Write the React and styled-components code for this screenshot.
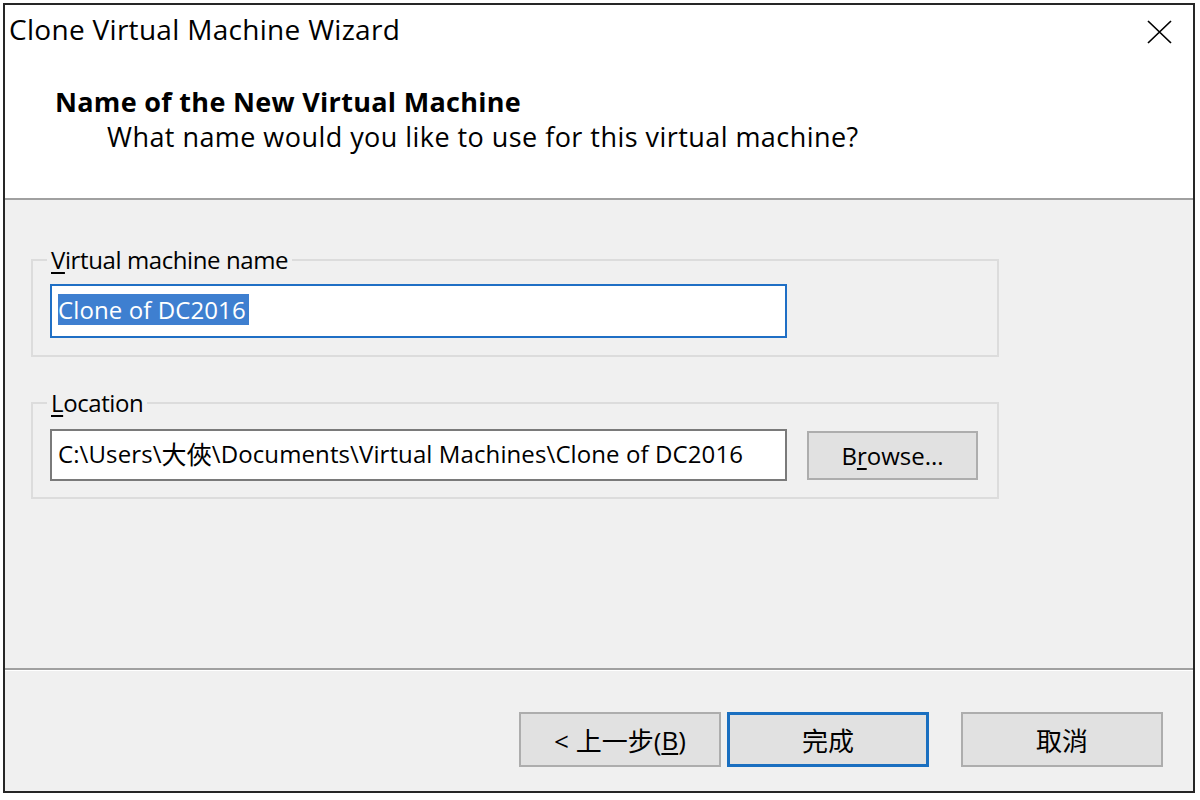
import React from 'react';
import styled, { createGlobalStyle } from 'styled-components';

const GlobalStyle = createGlobalStyle`
  html, body { margin: 0; padding: 0; background: #fff; }
  body { font-family: "Open Sans", "Noto Sans CJK TC", sans-serif; color: #000; }
  *, *::before, *::after { box-sizing: border-box; }
`;

const Dialog = styled.div`
  margin: 3px 0 0 3px;
  width: 1192px;
  height: 790px;
  border: 2px solid #262626;
  display: flex;
  flex-direction: column;
  background: #f0f0f0;
`;

const Header = styled.header`
  background: #fff;
  height: 195px;
  padding: 6px 0 0 4px;
  border-bottom: 2px solid #a0a0a0;
`;

const TitleBar = styled.div`
  display: flex;
  justify-content: space-between;
  align-items: flex-start;
  height: 36px;
`;

const Title = styled.div`
  font-family: "Open Sans", sans-serif;
  font-size: 28px;
  letter-spacing: 0.3px;
  line-height: 36px;
  color: #000;
`;

const CloseButton = styled.div`
  width: 25px;
  height: 24px;
  margin: 9px 21px 0 0;
  display: flex;
`;

const HeaderText = styled.div`
  margin-top: 37px;
  padding-left: 46px;
`;

const Heading = styled.div`
  font-family: "Open Sans", sans-serif;
  font-weight: 700;
  font-size: 27px;
  letter-spacing: 0.3px;
  line-height: 35px;
`;

const SubHeading = styled.div`
  font-family: "Open Sans", sans-serif;
  font-size: 27px;
  letter-spacing: 0.45px;
  line-height: 35px;
  padding-left: 52px;
`;

const Content = styled.main`
  flex: 1;
  padding: 46px 0 0 26px;
`;

const Group = styled.fieldset`
  margin: ${(p) => p.$top || 0}px 0 0 0;
  width: 968px;
  border: 2px solid #dcdcdc;
  padding: ${(p) => p.$padTop}px 19px ${(p) => p.$padBottom}px 17px;
  min-width: 0;
`;

const Legend = styled.legend`
  padding: 0 4px;
  margin-left: -3px;
  font-size: 24px;
  letter-spacing: -0.4px;
  line-height: 28px;
`;

const Key = styled.span`
  text-decoration: underline;
  text-underline-offset: 3px;
  text-decoration-thickness: 2px;
`;

const Row = styled.div`
  display: flex;
  align-items: center;
  gap: 20px;
`;

const TextBox = styled.div`
  width: 737px;
  height: ${(p) => p.$h}px;
  background: #fff;
  border: 2px solid ${(p) => (p.$focused ? '#1f6fc5' : '#7a7a7a')};
  padding: 0 0 4px 6px;
  display: flex;
  align-items: center;
  font-size: 24px;
  letter-spacing: 0.1px;
  white-space: nowrap;
  overflow: hidden;
`;

const Selected = styled.span`
  background: #3e7fd0;
  color: #fff;
  line-height: 31px;
  padding-right: 3px;
`;

const Cjk = styled.span`
  font-family: "Noto Sans CJK TC", sans-serif;
  font-size: 25px;
`;

const Button = styled.div`
  width: ${(p) => p.$w}px;
  height: ${(p) => p.$h}px;
  margin-left: ${(p) => p.$gap || 0}px;
  background: #e1e1e1;
  border: ${(p) => (p.$default ? '3px solid #1a6fc0' : '2px solid #adadad')};
  display: flex;
  align-items: center;
  justify-content: center;
  font-family: "Open Sans", "Noto Sans CJK TC", sans-serif;
  font-size: ${(p) => p.$fs}px;
  white-space: nowrap;
  flex-shrink: 0;
`;

const Separator = styled.div`
  border-top: 2px solid #a0a0a0;
  border-bottom: 1px solid #fff;
`;

const Footer = styled.footer`
  display: flex;
  justify-content: flex-end;
  padding: 41px 30px 24px 0;
`;

export default function App() {
  return (
    <>
      <GlobalStyle />
      <Dialog>
        <Header>
          <TitleBar>
            <Title>Clone Virtual Machine Wizard</Title>
            <CloseButton>
              <svg width="25" height="24" viewBox="0 0 25 24">
                <path d="M1 1 L24 23 M24 1 L1 23" stroke="#000" strokeWidth="1.7" fill="none" />
              </svg>
            </CloseButton>
          </TitleBar>
          <HeaderText>
            <Heading>Name of the New Virtual Machine</Heading>
            <SubHeading>What name would you like to use for this virtual machine?</SubHeading>
          </HeaderText>
        </Header>
        <Content>
          <Group $padTop={10} $padBottom={17}>
            <Legend><Key>V</Key>irtual machine name</Legend>
            <TextBox $focused $h={54}>
              <Selected>Clone of DC2016</Selected>
            </TextBox>
          </Group>
          <Group $top={32} $padTop={12} $padBottom={16}>
            <Legend><Key>L</Key>ocation</Legend>
            <Row>
              <TextBox $h={52}>
                C:\Users\<Cjk>大俠</Cjk>\Documents\Virtual Machines\Clone of DC2016
              </TextBox>
              <Button $w={171} $h={49} $fs={24}>B<Key>r</Key>owse...</Button>
            </Row>
          </Group>
        </Content>
        <Separator />
        <Footer>
          <Button $w={202} $h={55} $fs={26}>&lt; 上一步(<Key>B</Key>)</Button>
          <Button $w={202} $h={55} $fs={26} $gap={6} $default>完成</Button>
          <Button $w={202} $h={55} $fs={26} $gap={32}>取消</Button>
        </Footer>
      </Dialog>
    </>
  );
}
